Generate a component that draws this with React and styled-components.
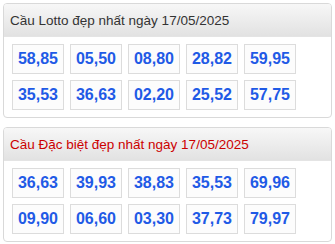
import React from "react";
import styled, { createGlobalStyle } from "styled-components";

const Global = createGlobalStyle`
  html, body { margin: 0; padding: 0; background: #fff; }
  body { font-family: "Liberation Sans", Arial, sans-serif; }
`;

const Page = styled.div`
  padding: 3px 3px 0 3px;
  display: flex;
  flex-direction: column;
  gap: 9px;
  width: 329px;
`;

const Card = styled.section`
  border: 1px solid #d9d9d9;
  border-radius: 4px;
  overflow: hidden;
  background: #fff;
`;

const Header = styled.div`
  height: 32px;
  display: flex;
  align-items: center;
  padding: 0 6px;
  font-size: 13.5px;
  color: ${(p) => (p.$red ? "#cc0000" : "#333333")};
  background: linear-gradient(to bottom, #f7f7f7 0%, #e2e2e2 100%);
  border-bottom: 1px solid #e4e4e4;
  white-space: nowrap;
`;

const Body = styled.div`
  padding: 7px 8px 7px 8px;
  display: grid;
  grid-template-columns: repeat(5, 52px);
  grid-auto-rows: 30px;
  gap: 6px;
`;

const Num = styled.div`
  border: 1px solid #dcdcdc;
  background: #fcfcfc;
  display: flex;
  align-items: center;
  justify-content: center;
  font-weight: bold;
  font-size: 16px;
  color: #1f5ae6;
`;

const data = [
  {
    title: "Cầu Lotto đẹp nhất ngày 17/05/2025",
    red: false,
    nums: ["58,85", "05,50", "08,80", "28,82", "59,95", "35,53", "36,63", "02,20", "25,52", "57,75"],
  },
  {
    title: "Cầu Đặc biệt đẹp nhất ngày 17/05/2025",
    red: true,
    nums: ["36,63", "39,93", "38,83", "35,53", "69,96", "09,90", "06,60", "03,30", "37,73", "79,97"],
  },
];

export default function App() {
  return (
    <>
      <Global />
      <Page>
        {data.map((c) => (
          <Card key={c.title}>
            <Header $red={c.red}>{c.title}</Header>
            <Body>
              {c.nums.map((n, i) => (
                <Num key={i}>{n}</Num>
              ))}
            </Body>
          </Card>
        ))}
      </Page>
    </>
  );
}
